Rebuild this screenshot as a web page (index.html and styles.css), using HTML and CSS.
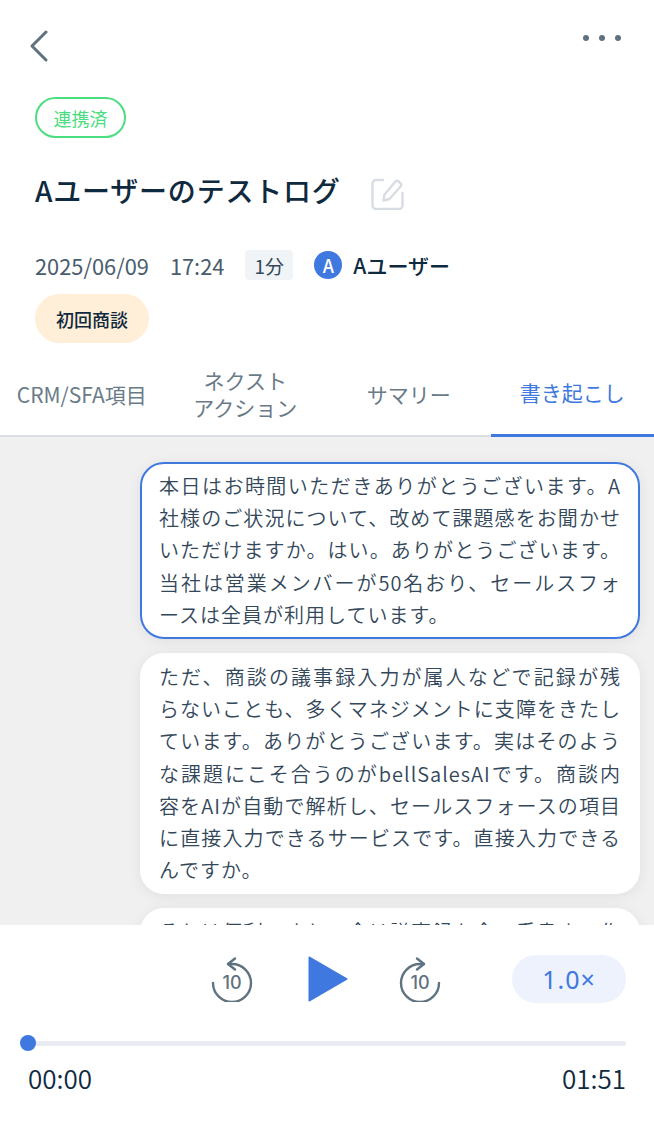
FILE: index.html
```html
<!DOCTYPE html>
<html lang="ja">
<head>
    <meta charset="UTF-8">
    <meta name="viewport" content="width=device-width, initial-scale=1.0">
    <title>Aユーザーのテストログ</title>
    <link rel="stylesheet" href="styles.css">
</head>
<body>
    <div class="screen">
        <div class="top-bar">
            <svg class="back-icon" width="20" height="32" viewBox="0 0 20 32"><path d="M17 2 3 16l14 14" fill="none" stroke="#5f7280" stroke-width="3" stroke-linecap="round" stroke-linejoin="round"/></svg>
            <div class="more">
                <span class="dot"></span><span class="dot"></span><span class="dot"></span>
            </div>
        </div>

        <div class="head">
            <span class="status-badge">連携済</span>
            <div class="title-row">
                <h1>Aユーザーのテストログ</h1>
                <svg class="edit-icon" width="34" height="34" viewBox="0 0 34 34" fill="none" stroke="#d7dde3" stroke-width="2.400" stroke-linecap="round" stroke-linejoin="round">
                    <path d="M13 4H6a3.500 3.500 0 0 0-3.500 3.500v22A3.500 3.500 0 0 0 6 33h23a3.500 3.500 0 0 0 3.500-3.500V17"/>
                    <path d="M25.500 5.500a2 2 0 0 1 3 0l2 1.800a2 2 0 0 1 .2 3L19.500 23l-6 1.500 1-6z"/>
                </svg>
            </div>
            <div class="meta-row">
                <span class="date">2025/06/09</span>
                <span class="time">17:24</span>
                <span class="duration">1分</span>
                <span class="avatar">A</span>
                <span class="user-name">Aユーザー</span>
            </div>
            <span class="tag">初回商談</span>
        </div>

        <div class="tabs">
            <div class="tab">CRM/SFA項目</div>
            <div class="tab">ネクスト<br>アクション</div>
            <div class="tab">サマリー</div>
            <div class="tab active">書き起こし</div>
        </div>

        <div class="chat">
            <div class="bubble selected">
                <span class="line">本日はお時間いただきありがとうございます。A</span>
                <span class="line">社様のご状況について、改めて課題感をお聞かせ</span>
                <span class="line">いただけますか。はい。ありがとうございます。</span>
                <span class="line">当社は営業メンバーが50名おり、セールスフォ</span>
                <span class="line last">ースは全員が利用しています。</span>
            </div>
            <div class="bubble">
                <span class="line">ただ、商談の議事録入力が属人などで記録が残</span>
                <span class="line">らないことも、多くマネジメントに支障をきたし</span>
                <span class="line">ています。ありがとうございます。実はそのよう</span>
                <span class="line">な課題にこそ合うのがbellSalesAIです。商談内</span>
                <span class="line">容をAIが自動で解析し、セールスフォースの項目</span>
                <span class="line">に直接入力できるサービスです。直接入力できる</span>
                <span class="line last">んですか。</span>
            </div>
            <div class="bubble">
                <span class="line">それは便利ですね。今は議事録を全て手書きで作</span>
            </div>
        </div>

        <div class="player">
            <div class="controls">
                <svg class="skip back" width="44" height="46" viewBox="0 0 44 46" fill="none" stroke="#5f7280" stroke-width="2.400" stroke-linecap="round" stroke-linejoin="round">
                    <path d="M3 27a19 19 0 1 0 19-19h-4"/>
                    <path d="M25 2.500 18 8l7 5.500"/>
                    <text x="22" y="33" class="skip-text">10</text>
                </svg>
                <svg class="play" width="40" height="46" viewBox="0 0 40 46"><path d="M1.500 1.500 38.500 23 1.500 44.500z" fill="#3f78de" stroke="#3f78de" stroke-width="2" stroke-linejoin="round"/></svg>
                <svg class="skip forward" width="44" height="46" viewBox="0 0 44 46" fill="none" stroke="#5f7280" stroke-width="2.400" stroke-linecap="round" stroke-linejoin="round">
                    <path d="M41 27a19 19 0 1 1-19-19h4"/>
                    <path d="M19 2.500 26 8l-7 5.500"/>
                    <text x="22" y="33" class="skip-text">10</text>
                </svg>
                <div class="speed">1.0×</div>
            </div>
            <div class="track">
                <span class="knob"></span>
            </div>
            <div class="times">
                <span>00:00</span>
                <span>01:51</span>
            </div>
        </div>
    </div>
</body>
</html>
```

FILE: styles.css
```css
* { margin: 0; padding: 0; box-sizing: border-box; font-family: "Noto Sans CJK JP", "Noto Sans", sans-serif; }

body {
    background: white;
}

.screen {
    display: flex;
    flex-direction: column;
    width: 654px;
    height: 1124px;
    overflow: hidden;
    background: white;
}

/* top bar */
.top-bar {
    display: flex;
    justify-content: space-between;
    align-items: flex-start;
    height: 97px;
    padding: 30px 33px 0 29px;
}

.back-icon { display: block; }

.more {
    display: flex;
    gap: 10px;
    padding-top: 5px;
}

.dot {
    width: 6px; height: 6px;
    border-radius: 50%;
    background: #5f7280;
}

/* heading block */
.head {
    display: flex;
    flex-direction: column;
    align-items: flex-start;
    padding: 0 35px;
}

.status-badge {
    display: flex;
    align-items: center;
    justify-content: center;
    width: 91px; height: 41px;
    border: 2px solid #4ade80;
    border-radius: 21px;
    color: #4ade80;
    font-size: 18px;
}

.title-row {
    display: flex;
    align-items: center;
    gap: 29px;
    height: 34px;
    margin-top: 35px;
}

h1 {
    font-size: 28px;
    font-weight: 500;
    letter-spacing: 0.8px;
    color: #0f2a3f;
}

.edit-icon { margin-top: 6px; }

.meta-row {
    display: flex;
    align-items: center;
    height: 30px;
    margin-top: 43px;
    color: #4a5d6e;
    font-size: 21.800px;
}

.time { margin-left: 21px; }

.duration {
    display: flex;
    align-items: center;
    justify-content: center;
    width: 48px; height: 30px;
    margin-left: 21px;
    background: #f1f4f7;
    border-radius: 4px;
    font-size: 19px;
    color: #33475a;
}

.avatar {
    display: flex;
    align-items: center;
    justify-content: center;
    width: 28px; height: 28px;
    margin-left: 21px;
    border-radius: 50%;
    background: #3f78de;
    color: white;
    font-size: 18px;
    font-weight: 500;
}

.user-name {
    margin-left: 11px;
    font-size: 21px;
    font-weight: 500;
    color: #0f2a3f;
}

.tag {
    display: flex;
    align-items: center;
    justify-content: center;
    width: 114px; height: 49px;
    margin-top: 14px;
    background: #ffefd8;
    border-radius: 25px;
    font-size: 18px;
    font-weight: 500;
    color: #0f2a3f;
}

/* tabs */
.tabs {
    display: grid;
    grid-template-columns: repeat(4, 1fr);
    height: 94px;
    padding-top: 8px;
    border-bottom: 2px solid #dadde1;
}

.tab {
    display: flex;
    align-items: center;
    justify-content: center;
    margin-bottom: -2px;
    text-align: center;
    font-size: 21px;
    line-height: 27px;
    color: #6a7b88;
}

.tab.active {
    color: #3f78de;
    border-bottom: 3px solid #3f78de;
}

/* transcript */
.chat {
    flex: 1;
    min-height: 0;
    overflow: hidden;
    display: flex;
    flex-direction: column;
    align-items: flex-end;
    gap: 14px;
    padding: 25px 14px 0 0;
    background: #f0f0f0;
}

.bubble {
    flex-shrink: 0;
    width: 500px;
    padding: 6px 17px 6px 17px;
    background: white;
    border: 2px solid white;
    border-radius: 24px;
    box-shadow: 0 2px 14px rgba(0, 0, 0, 0.07);
    font-size: 20px;
    font-weight: 350;
    letter-spacing: 1px;
    line-height: 32.200px;
    color: #33475a;
    text-spacing-trim: space-all;
}

.bubble.selected {
    border-color: #3f78de;
}

.line {
    display: block;
    white-space: nowrap;
    text-align: justify;
    text-align-last: justify;
}

.line.last { text-align-last: left; }

/* audio player */
.player {
    height: 199px;
    padding: 30px 28px 0;
    background: white;
    position: relative;
}

.controls {
    display: flex;
    align-items: center;
    height: 48px;
    padding-left: 182px;
}

.skip-text {
    font-family: "Inter", sans-serif;
    font-size: 18px;
    font-weight: 500;
    fill: #5f7280;
    stroke: none;
    text-anchor: middle;
}

.play { margin-left: 54px; }
.forward { margin-left: 50px; }

.speed {
    display: flex;
    align-items: center;
    justify-content: center;
    width: 114px; height: 48px;
    margin-left: auto;
    background: #edf2fc;
    border-radius: 24px;
    font-family: "Noto Sans", sans-serif;
    font-size: 25px;
    letter-spacing: 1px;
    color: #3f78de;
}

.track {
    position: relative;
    height: 5px;
    margin-top: 38px;
    background: #eaeaf3;
    border-radius: 3px;
}

.knob {
    position: absolute;
    left: -8px; top: -6px;
    width: 16px; height: 16px;
    border-radius: 50%;
    background: #3f78de;
}

.times {
    display: flex;
    justify-content: space-between;
    margin-top: 14px;
    font-size: 26px;
    font-weight: 350;
    line-height: 36px;
    color: #0f2a3f;
}
```
